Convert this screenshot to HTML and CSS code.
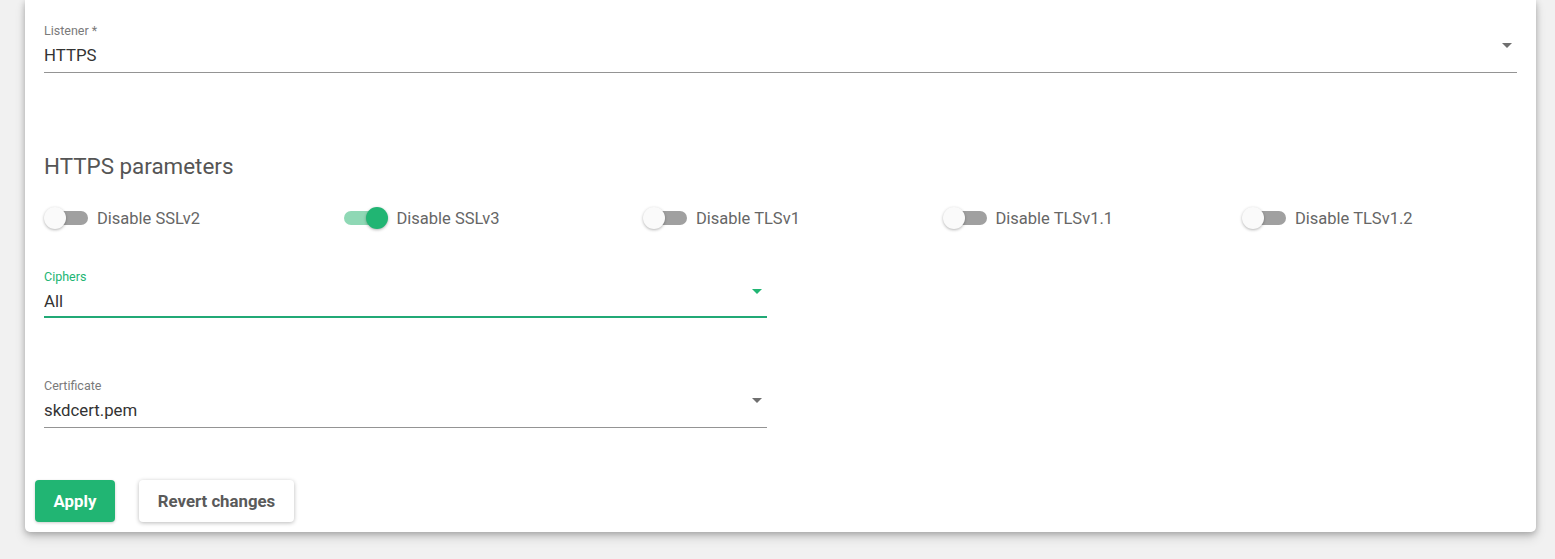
FILE: index.html
```html
<!DOCTYPE html>
<html>
<head>
<meta charset="utf-8">
<link rel="stylesheet" href="styles.css">
</head>
<body>
<div class="card">
  <div class="content">
    <div class="field field-full">
      <div class="field-label">Listener *</div>
      <div class="field-input">
        <span class="field-value">HTTPS</span>
        <span class="arrow"></span>
      </div>
    </div>

    <h2 class="section-title">HTTPS parameters</h2>

    <div class="switch-row">
      <label class="switch-item"><span class="switch"><span class="track"></span><span class="thumb"></span></span><span class="switch-label">Disable SSLv2</span></label>
      <label class="switch-item"><span class="switch on"><span class="track"></span><span class="thumb"></span></span><span class="switch-label">Disable SSLv3</span></label>
      <label class="switch-item"><span class="switch"><span class="track"></span><span class="thumb"></span></span><span class="switch-label">Disable TLSv1</span></label>
      <label class="switch-item"><span class="switch"><span class="track"></span><span class="thumb"></span></span><span class="switch-label">Disable TLSv1.1</span></label>
      <label class="switch-item"><span class="switch"><span class="track"></span><span class="thumb"></span></span><span class="switch-label">Disable TLSv1.2</span></label>
    </div>

    <div class="field field-half focused ciphers">
      <div class="field-label">Ciphers</div>
      <div class="field-input">
        <span class="field-value">All</span>
        <span class="arrow"></span>
      </div>
    </div>

    <div class="field field-half certificate">
      <div class="field-label">Certificate</div>
      <div class="field-input">
        <span class="field-value">skdcert.pem</span>
        <span class="arrow"></span>
      </div>
    </div>
  </div>

  <div class="actions">
    <button class="btn btn-primary">Apply</button>
    <button class="btn btn-secondary">Revert changes</button>
  </div>
</div>
</body>
</html>
```

FILE: styles.css
```css
html, body {
  margin: 0;
  padding: 0;
}
body {
  background: #f1f1f1;
  font-family: Roboto, "Liberation Sans", Arial, sans-serif;
  width: 1555px;
  height: 559px;
  overflow: hidden;
}
.card {
  margin-left: 25px;
  width: 1511px;
  background: #fff;
  border-radius: 0 0 5px 5px;
  box-shadow: 0 2px 6px rgba(0,0,0,0.25), 0 6px 12px rgba(0,0,0,0.12);
  padding: 24px 0 10px 10px;
  box-sizing: border-box;
}
.content {
  padding-left: 9px;
}
.field {
  position: relative;
}
.field-full {
  width: 1473px;
}
.field-half {
  width: 723px;
}
.field-label {
  font-size: 12.5px;
  line-height: 14px;
  height: 14px;
  color: #7a7a7a;
}
.field-input {
  position: relative;
  margin-top: 7px;
  padding-bottom: 8px;
  border-bottom: 1px solid #949494;
}
.field-value {
  display: block;
  font-size: 16.8px;
  line-height: 20px;
  height: 19px;
  color: #333;
}
.arrow {
  position: absolute;
  right: 5px;
  top: -2px;
  width: 0;
  height: 0;
  border-left: 5.5px solid transparent;
  border-right: 5.5px solid transparent;
  border-top: 5.5px solid #6f6f6f;
}
.focused .field-label {
  color: #21b573;
}
.focused .field-input {
  border-bottom: 2px solid #21a976;
  padding-bottom: 6px;
}
.focused .arrow {
  border-top-color: #21b573;
}
.section-title {
  margin: 81px 0 0 0;
  font-size: 22.4px;
  line-height: 24px;
  font-weight: 400;
  color: #555;
}
.switch-row {
  margin-top: 29px;
  display: grid;
  grid-template-columns: repeat(5, 299.5px);
  height: 22px;
}
.switch-item {
  display: flex;
  align-items: center;
  gap: 9px;
}
.switch {
  position: relative;
  width: 44px;
  height: 22px;
  flex: none;
}
.track {
  position: absolute;
  left: 4px;
  right: 0;
  top: 4px;
  height: 14px;
  border-radius: 7px;
  background: #a0a0a0;
}
.thumb {
  position: absolute;
  left: 0;
  top: 0;
  width: 22px;
  height: 22px;
  border-radius: 50%;
  background: #fafafa;
  box-shadow: 0 1px 3px rgba(0,0,0,0.3);
}
.switch.on .track {
  left: 0;
  right: 4px;
  background: #8fd8b5;
}
.switch.on .thumb {
  left: 22px;
  background: #21b573;
}
.switch-label {
  font-size: 16.5px;
  line-height: 19px;
  color: #666;
}
.ciphers {
  margin-top: 41px;
}
.certificate {
  margin-top: 61px;
}
.actions {
  margin-top: 52px;
  display: flex;
  gap: 24px;
}
.btn {
  height: 42px;
  border: none;
  border-radius: 4px;
  font-family: Roboto, "Liberation Sans", Arial, sans-serif;
  font-size: 16.8px;
  font-weight: 700;
  cursor: pointer;
}
.btn-primary {
  width: 80px;
  background: #21b573;
  color: #fff;
  box-shadow: 0 1px 3px rgba(0,0,0,0.2);
}
.btn-secondary {
  width: 155px;
  background: #fff;
  color: #5a5a5a;
  box-shadow: 0 1px 4px rgba(0,0,0,0.28);
}
```
